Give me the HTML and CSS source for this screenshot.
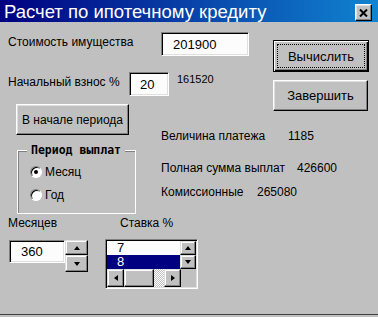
FILE: index.html
```html
<!DOCTYPE html>
<html lang="ru">
<head>
    <meta charset="UTF-8">
    <title>Расчет по ипотечному кредиту</title>
    <link rel="stylesheet" href="styles.css">
</head>
<body>
    <div class="window">
        <div class="titlebar">
            <span class="title">Расчет по ипотечному кредиту</span>
            <button class="close">
                <svg width="9" height="8" viewBox="0 0 9 8"><path d="M1 0.5 L8 7.5 M8 0.5 L1 7.5" stroke="#000" stroke-width="2"/></svg>
            </button>
        </div>
        <div class="form">
            <div class="row row-cost">
                <span class="label cost-label">Стоимость имущества</span>
                <div class="textbox cost-box">201900</div>
            </div>
            <div class="actions">
                <button class="btn btn-default"><span class="focus">Вычислить</span></button>
                <button class="btn btn-exit">Завершить</button>
            </div>
            <div class="row row-down">
                <span class="label down-label">Начальный взнос %</span>
                <div class="textbox down-box">20</div>
                <span class="small">161520</span>
            </div>
            <div class="middle">
                <div class="mid-left">
                    <button class="btn btn-period">В начале периода</button>
                    <div class="group">
                        <span class="legend">Период выплат</span>
                        <div class="radio radio-first"><span class="dot checked"></span>Месяц</div>
                        <div class="radio"><span class="dot"></span>Год</div>
                    </div>
                </div>
                <div class="results">
                    <div class="result r-pay"><span class="r-name">Величина платежа</span><span>1185</span></div>
                    <div class="result r-total"><span class="r-name">Полная сумма выплат</span><span>426600</span></div>
                    <div class="result r-fee"><span class="r-name">Комиссионные</span><span>265080</span></div>
                </div>
            </div>
            <div class="bottom-labels">
                <span class="months-label">Месяцев</span>
                <span>Ставка %</span>
            </div>
            <div class="bottom-controls">
                <div class="spin">
                    <div class="textbox months-box">360</div>
                    <div class="spin-buttons">
                        <span class="sbtn spin-up"><i class="arrow up"></i></span>
                        <span class="sbtn spin-down"><i class="arrow down"></i></span>
                    </div>
                </div>
                <div class="listbox">
                    <div class="list-main">
                        <div class="list-items">
                            <div class="item">7</div>
                            <div class="item selected">8</div>
                        </div>
                        <div class="vscroll">
                            <span class="sbtn vbtn"><i class="arrow up"></i></span>
                            <span class="sbtn vbtn"><i class="arrow down"></i></span>
                        </div>
                    </div>
                    <div class="hscroll-row">
                        <div class="hscroll">
                            <span class="sbtn hbtn"><i class="arrow left"></i></span>
                            <span class="thumb"></span>
                            <span class="track"></span>
                            <span class="sbtn hbtn"><i class="arrow right"></i></span>
                        </div>
                        <div class="corner"></div>
                    </div>
                </div>
            </div>
        </div>
    </div>
</body>
</html>
```

FILE: styles.css
```css
body {
    margin: 0;
    background-color: #c0c0c0;
    font-family: 'Liberation Sans', Arial, sans-serif;
    font-size: 12px;
    color: #000;
}
.window {
    width: 378px;
    height: 314px;
    background: #c0c0c0;
    border-bottom: 1px solid #404040;
}
.titlebar {
    height: 22px;
    display: flex;
    align-items: center;
    justify-content: space-between;
    padding: 0 6px 0 4px;
    background: linear-gradient(to right, #000080, #1084d0);
}
.title {
    color: #fff;
    font-size: 18.5px;
    line-height: 21px;
}
.close {
    box-sizing: border-box;
    width: 17px;
    height: 17px;
    margin-top: 3px;
    padding: 0;
    display: flex;
    align-items: center;
    justify-content: center;
    background: #c0c0c0;
    border: 1px solid;
    border-color: #fff #000 #000 #fff;
    box-shadow: inset -1px -1px #808080, inset 1px 1px #dfdfdf;
}

.form {
    display: grid;
    grid-template-columns: 273px 96px;
    grid-template-rows: 34px 40px auto auto auto;
}
.row {
    display: flex;
    align-items: flex-start;
}
.label {
    box-sizing: border-box;
    padding: 3px 0 0 8px;
    line-height: 14px;
}
.row-cost {
    grid-row: 1;
    grid-column: 1;
    padding-top: 10px;
}
.cost-label {
    width: 161px;
}
.row-down {
    grid-row: 2;
    grid-column: 1;
    padding-top: 16px;
}
.down-label {
    width: 129px;
}
.textbox {
    box-sizing: border-box;
    height: 24px;
    display: flex;
    align-items: center;
    padding-left: 11px;
    background: #fcfcfc;
    border: 1px solid;
    border-color: #808080 #fff #fff #808080;
    box-shadow: inset 1px 1px #000, inset -1px -1px #dfdfdf;
    font-size: 13px;
}
.cost-box {
    width: 88px;
}
.down-box {
    width: 40px;
    padding-left: 10px;
}
.small {
    font-size: 11px;
    line-height: 13px;
    margin: 1px 0 0 8px;
}

.actions {
    grid-row: 1 / 3;
    grid-column: 2;
    padding-top: 18px;
    display: flex;
    flex-direction: column;
    align-items: flex-start;
    gap: 8px;
}
.btn {
    box-sizing: border-box;
    flex-shrink: 0;
    padding: 0;
    background: #c0c0c0;
    border: 1px solid;
    border-color: #fff #000 #000 #fff;
    box-shadow: inset -1px -1px #808080, inset 1px 1px #dfdfdf;
    font-family: 'Liberation Sans', Arial, sans-serif;
    font-size: 13px;
    color: #000;
}
.btn-default {
    width: 96px;
    height: 32px;
    padding: 3px;
    display: flex;
    border-color: #000;
    box-shadow: inset 1px 1px #fff, inset -1px -1px #000, inset -2px -2px #808080;
}
.focus {
    flex: 1;
    display: flex;
    align-items: center;
    justify-content: center;
    border: 1px dotted #000;
}
.btn-exit {
    width: 95px;
    height: 31px;
}

.middle {
    grid-row: 3;
    grid-column: 1 / 3;
    display: flex;
}
.mid-left {
    box-sizing: border-box;
    width: 161px;
    padding-left: 16px;
}
.btn-period {
    display: block;
    width: 113px;
    height: 31px;
    margin-top: 8px;
    font-size: 12px;
}
.group {
    box-sizing: border-box;
    width: 119px;
    height: 64px;
    margin: 15px 0 0 1px;
    border: 1px solid #fff;
    box-shadow: inset 1px 1px #808080;
}
.legend {
    display: table;
    margin: -8px 0 0 9px;
    padding: 0 4px;
    background: #c0c0c0;
    font-family: 'DejaVu Sans Mono', 'Liberation Mono', monospace;
    font-weight: bold;
    font-size: 11.5px;
    line-height: 14px;
}
.radio {
    display: flex;
    align-items: center;
    height: 16px;
    padding-left: 12px;
    margin-top: 7px;
}
.dot {
    box-sizing: border-box;
    width: 12px;
    height: 12px;
    margin-right: 3px;
    border-radius: 50%;
    background: #fff;
    border: 1px solid;
    border-color: #808080 #fff #fff #808080;
    box-shadow: inset 1px 1px #000;
    display: flex;
    align-items: center;
    justify-content: center;
}
.dot.checked::after {
    content: "";
    width: 4px;
    height: 4px;
    border-radius: 50%;
    background: #000;
}

.results {
    padding-top: 33px;
    line-height: 14px;
}
.result {
    display: flex;
}
.r-total {
    margin-top: 18px;
}
.r-fee {
    margin-top: 10px;
}
.r-pay .r-name {
    width: 127px;
}
.r-total .r-name {
    width: 136px;
}
.r-fee .r-name {
    width: 96px;
}

.bottom-labels {
    grid-row: 4;
    grid-column: 1 / 3;
    display: flex;
    padding-top: 2px;
    line-height: 15px;
}
.months-label {
    box-sizing: border-box;
    width: 120px;
    padding-left: 8px;
}
.bottom-controls {
    grid-row: 5;
    grid-column: 1 / 3;
    display: flex;
    align-items: flex-start;
    margin-top: 8px;
}
.spin {
    display: flex;
    margin: 1px 0 0 9px;
}
.months-box {
    width: 56px;
    height: 23px;
}
.spin-buttons {
    display: flex;
    flex-direction: column;
}
.sbtn {
    box-sizing: border-box;
    display: flex;
    align-items: center;
    justify-content: center;
    background: #c0c0c0;
    border: 1px solid;
    border-color: #dfdfdf #000 #000 #dfdfdf;
    box-shadow: inset -1px -1px #808080, inset 1px 1px #fff;
}
.spin-up {
    width: 23px;
    height: 15px;
}
.spin-down {
    width: 23px;
    height: 17px;
}
.arrow {
    width: 0;
    height: 0;
    border: 0 solid transparent;
}
.arrow.up {
    border-width: 0 3px 4px;
    border-bottom-color: #000;
}
.arrow.down {
    border-width: 4px 3px 0;
    border-top-color: #000;
}
.arrow.left {
    border-width: 3px 4px 3px 0;
    border-right-color: #000;
}
.arrow.right {
    border-width: 3px 0 3px 4px;
    border-left-color: #000;
}

.listbox {
    box-sizing: border-box;
    width: 93px;
    height: 50px;
    margin-left: 17px;
    background: #fcfcfc;
    border: 1px solid;
    border-color: #808080 #fff #fff #808080;
    box-shadow: inset 1px 1px #000, inset -1px -1px #dfdfdf;
    padding: 1px;
    font-size: 13px;
}
.list-main {
    display: flex;
    height: 28px;
}
.list-items {
    flex: 1;
}
.item {
    height: 14px;
    line-height: 14px;
    padding-left: 10px;
}
.item.selected {
    background: #000080;
    color: #fff;
}
.vscroll {
    width: 16px;
    display: flex;
    flex-direction: column;
}
.vbtn {
    height: 14px;
}
.hscroll-row {
    display: flex;
    height: 18px;
    background: #c0c0c0;
}
.hscroll {
    display: flex;
    width: 74px;
}
.hbtn {
    width: 17px;
}
.thumb {
    box-sizing: border-box;
    width: 30px;
    background: #c0c0c0;
    border: 1px solid;
    border-color: #dfdfdf #000 #000 #dfdfdf;
    box-shadow: inset -1px -1px #808080, inset 1px 1px #fff;
}
.track {
    flex: 1;
    background: repeating-conic-gradient(#fff 0 25%, #c0c0c0 0 50%) 0 0 / 2px 2px;
}
.corner {
    flex: 1;
}
```
